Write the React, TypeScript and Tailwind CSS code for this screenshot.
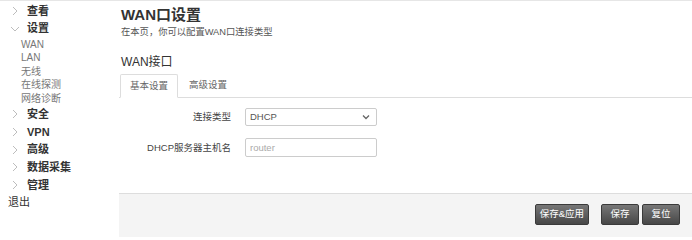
const FONT = "font-['Liberation_Sans','Noto_Sans_CJK_SC',sans-serif]";

type NavItem = { label: string; open?: boolean; children?: string[] };

const NAV: NavItem[] = [
  { label: "查看" },
  { label: "设置", open: true, children: ["WAN", "LAN", "无线", "在线探测", "网络诊断"] },
  { label: "安全" },
  { label: "VPN" },
  { label: "高级" },
  { label: "数据采集" },
  { label: "管理" },
];

function Chevron({ open }: { open?: boolean }) {
  return (
    <svg width="10" height="10" viewBox="0 0 10 10" className="shrink-0">
      {open ? (
        <polyline points="1,3 5,7 9,3" fill="none" stroke="#b5b5b5" strokeWidth="0.9" />
      ) : (
        <polyline points="3,1 7,5 3,9" fill="none" stroke="#b5b5b5" strokeWidth="0.9" />
      )}
    </svg>
  );
}

function Sidebar() {
  return (
    <nav className="w-[119px] shrink-0 pt-[1px]">
      <ul>
        {NAV.map((item) => (
          <li key={item.label}>
            <div className="flex h-[17.8px] items-center gap-[7px] pl-[10px]">
              <Chevron open={item.open} />
              <span className="text-[11px] font-bold text-[#333]">{item.label}</span>
            </div>
            {item.children && (
              <ul className="pl-[21px]">
                {item.children.map((c) => (
                  <li key={c} className="text-[10px] leading-[13.5px] text-[#777]">
                    {c}
                  </li>
                ))}
              </ul>
            )}
          </li>
        ))}
      </ul>
      <div className="pl-[8px] text-[11px] leading-[17.8px] text-[#333]">退出</div>
    </nav>
  );
}

function FieldRow({ label, children }: { label: string; children: React.ReactNode }) {
  return (
    <div className="flex items-center">
      <label className="w-[113px] pr-[1px] text-right text-[9.5px] leading-[12px] text-[#444]">{label}</label>
      <div className="ml-[13px] flex">{children}</div>
    </div>
  );
}

function Button({ children, wide }: { children: React.ReactNode; wide?: boolean }) {
  return (
    <button
      type="button"
      className={`h-[21px] rounded-[2px] border border-[#3a3a3a] bg-gradient-to-b from-[#777] to-[#474747] text-[9.5px] text-white ${wide ? "w-[38px]" : "px-[4px]"}`}
    >
      {children}
    </button>
  );
}

export default function App() {
  return (
    <div className={`${FONT} flex h-[237px] w-[692px] overflow-hidden border-t border-[#e6e6e6] bg-white`}>
      <Sidebar />
      <main className="flex min-w-0 flex-1 flex-col">
        <div className="pl-[2px]">
          <h1 className="mt-[4px] text-[15px] font-bold leading-[20px] text-[#333]">WAN口设置</h1>
          <p className="mt-[1px] text-[9.3px] leading-[13px] text-[#555]">在本页，你可以配置WAN口连接类型</p>
          <h2 className="mt-[15px] text-[12px] leading-[16px] text-[#333]">WAN接口</h2>
        </div>
        <div className="mt-[4px] flex border-b border-[#ddd] pl-[1px]">
          <div className="-mb-px flex h-[24px] w-[58px] items-center justify-center rounded-t-[2px] border border-b-white border-[#ddd] bg-white text-[9.5px] text-[#666]">
            基本设置
          </div>
          <div className="flex h-[23px] items-center pl-[11px] text-[9.5px] text-[#666]">高级设置</div>
        </div>
        <div className="mt-[10px] flex flex-col gap-[12px]">
          <FieldRow label="连接类型">
            <div className="flex h-[18px] w-[132px] items-center justify-between rounded-[2px] border border-[#ccc] pl-[4px] pr-[6px] text-[9.5px] text-[#555]">
              <span>DHCP</span>
              <svg width="8" height="6" viewBox="0 0 8 6">
                <polyline points="1,1.5 4,4.5 7,1.5" fill="none" stroke="#666" strokeWidth="1.3" />
              </svg>
            </div>
          </FieldRow>
          <FieldRow label="DHCP服务器主机名">
            <input
              placeholder="router"
              className="block h-[19px] w-[132px] rounded-[2px] border border-[#ccc] px-[4px] text-[9.5px] text-[#555] outline-none placeholder:text-[#aaa]"
            />
          </FieldRow>
        </div>
        <div className="mt-[36px] flex flex-1 items-start justify-end border-t border-[#ddd] bg-[#f4f4f4] pr-[12px] pt-[10px]">
          <Button>保存&amp;应用</Button>
          <div className="ml-[12px] flex gap-[3px]">
            <Button wide>保存</Button>
            <Button wide>复位</Button>
          </div>
        </div>
      </main>
    </div>
  );
}
